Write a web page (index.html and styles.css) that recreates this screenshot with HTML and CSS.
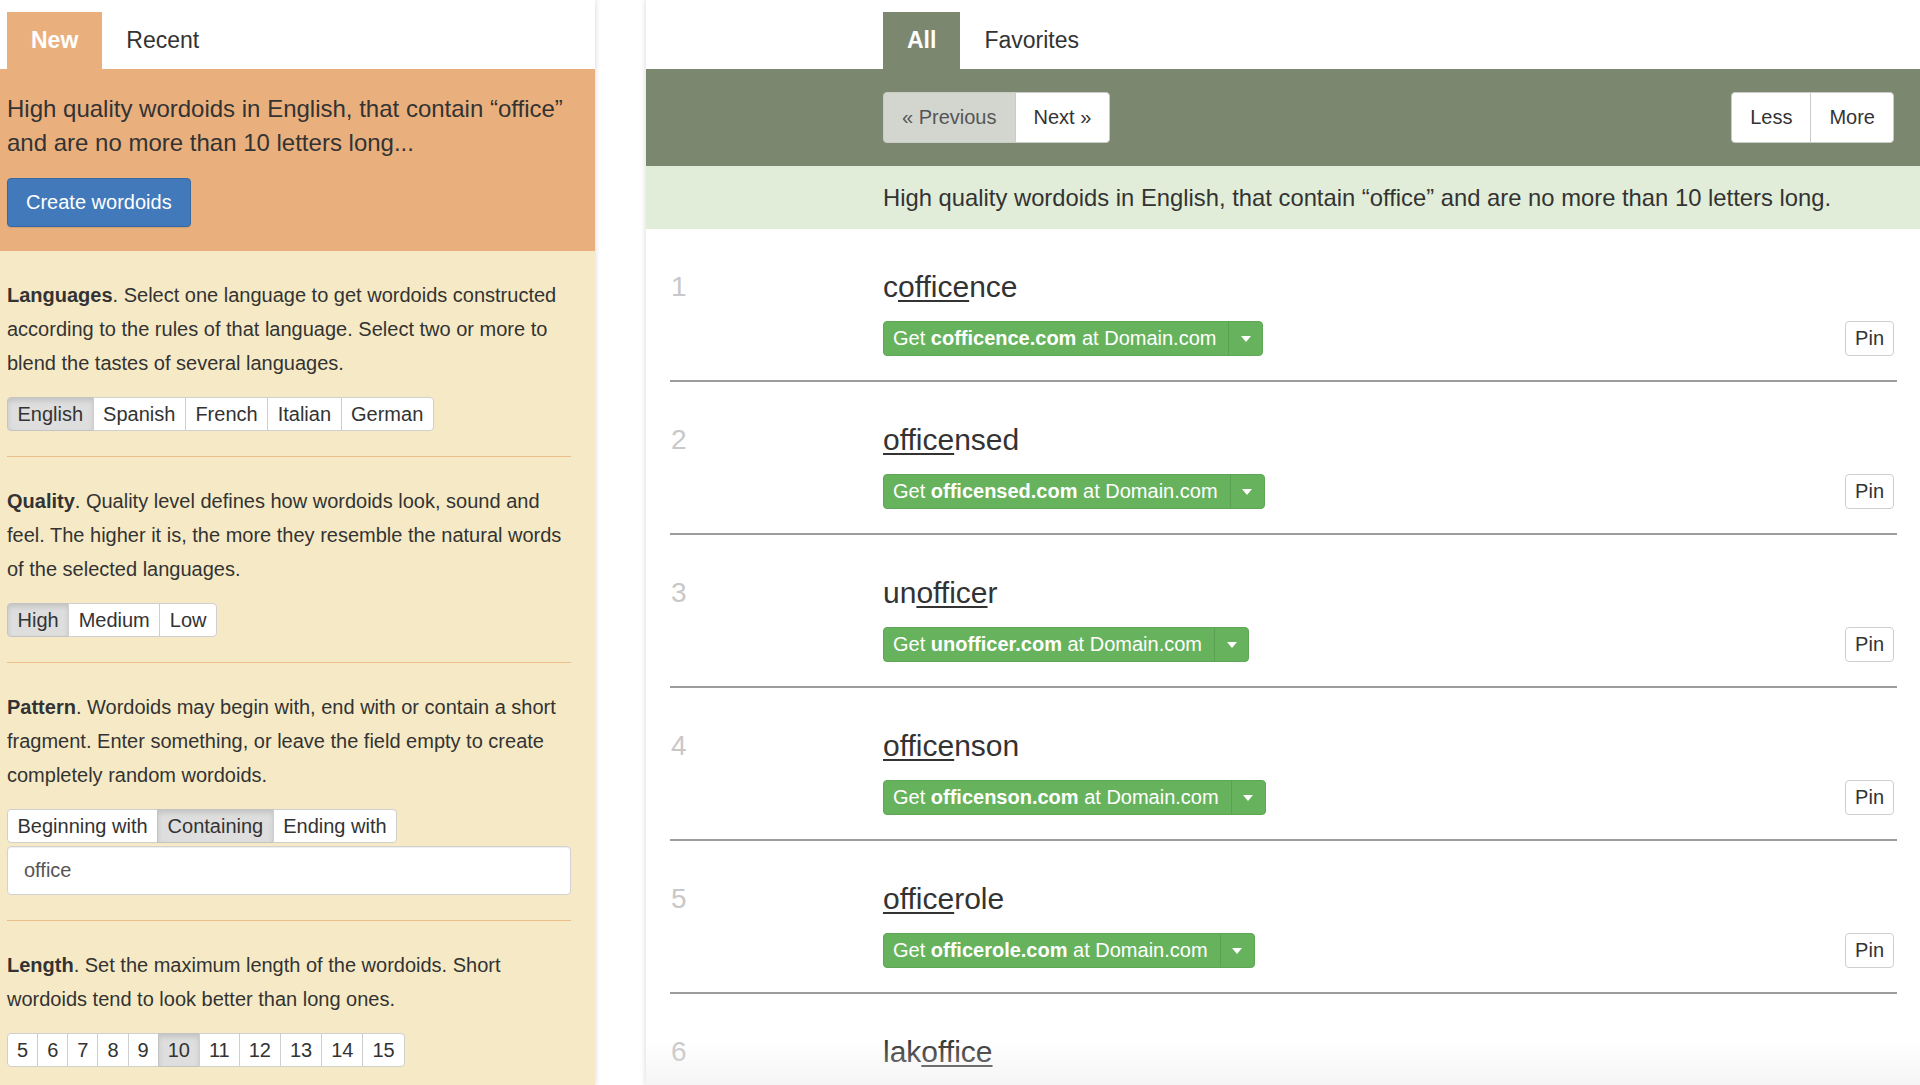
FILE: index.html
```html
<!DOCTYPE html>
<html lang="en">
<head>
  <meta charset="UTF-8" />
  <meta name="viewport" content="width=device-width, initial-scale=1" />
  <title>Wordoids</title>
  <link rel="stylesheet" href="styles.css">
</head>
<body>
<div class="app">

  <aside class="builder">
    <nav class="tabs tabs-builder">
      <a class="tab active">New</a>
      <a class="tab">Recent</a>
    </nav>

    <div class="intro">
      <p>High quality wordoids in English, that contain “office” and are no more than 10 letters long...</p>
      <button class="btn-create">Create wordoids</button>
    </div>

    <div class="options">
      <section class="option">
        <p><b>Languages</b>. Select one language to get wordoids constructed according to the rules of that language. Select two or more to blend the tastes of several languages.</p>
        <div class="btn-group">
          <span class="btn active">English</span>
          <span class="btn">Spanish</span>
          <span class="btn">French</span>
          <span class="btn">Italian</span>
          <span class="btn">German</span>
        </div>
      </section>

      <section class="option">
        <p><b>Quality</b>. Quality level defines how wordoids look, sound and feel. The higher it is, the more they resemble the natural words of the selected languages.</p>
        <div class="btn-group">
          <span class="btn active">High</span>
          <span class="btn">Medium</span>
          <span class="btn">Low</span>
        </div>
      </section>

      <section class="option">
        <p><b>Pattern</b>. Wordoids may begin with, end with or contain a short fragment. Enter something, or leave the field empty to create completely random wordoids.</p>
        <div class="btn-group">
          <span class="btn">Beginning with</span>
          <span class="btn active">Containing</span>
          <span class="btn">Ending with</span>
        </div>
        <input class="pattern-input" type="text" value="office">
      </section>

      <section class="option">
        <p><b>Length</b>. Set the maximum length of the wordoids. Short wordoids tend to look better than long ones.</p>
        <div class="btn-group lengths">
          <span class="btn">5</span>
          <span class="btn">6</span>
          <span class="btn">7</span>
          <span class="btn">8</span>
          <span class="btn">9</span>
          <span class="btn active">10</span>
          <span class="btn">11</span>
          <span class="btn">12</span>
          <span class="btn">13</span>
          <span class="btn">14</span>
          <span class="btn">15</span>
        </div>
      </section>
    </div>
  </aside>

  <main class="results">
    <nav class="tabs tabs-results">
      <a class="tab active">All</a>
      <a class="tab">Favorites</a>
    </nav>

    <div class="toolbar">
      <div class="btn-group pager">
        <span class="btn disabled">« Previous</span>
        <span class="btn">Next »</span>
      </div>
      <div class="btn-group pager">
        <span class="btn">Less</span>
        <span class="btn">More</span>
      </div>
    </div>

    <div class="summary">High quality wordoids in English, that contain “office” and are no more than 10 letters long.</div>

    <div class="list">
      <div class="row">
        <div class="num">1</div>
        <div class="word">c<u>office</u>nce</div>
        <div class="get"><span class="label">Get <b>cofficence.com</b> at Domain.com</span><span class="caret"></span></div>
        <span class="pin">Pin</span>
      </div>
      <div class="row">
        <div class="num">2</div>
        <div class="word"><u>office</u>nsed</div>
        <div class="get"><span class="label">Get <b>officensed.com</b> at Domain.com</span><span class="caret"></span></div>
        <span class="pin">Pin</span>
      </div>
      <div class="row">
        <div class="num">3</div>
        <div class="word">un<u>office</u>r</div>
        <div class="get"><span class="label">Get <b>unofficer.com</b> at Domain.com</span><span class="caret"></span></div>
        <span class="pin">Pin</span>
      </div>
      <div class="row">
        <div class="num">4</div>
        <div class="word"><u>office</u>nson</div>
        <div class="get"><span class="label">Get <b>officenson.com</b> at Domain.com</span><span class="caret"></span></div>
        <span class="pin">Pin</span>
      </div>
      <div class="row">
        <div class="num">5</div>
        <div class="word"><u>office</u>role</div>
        <div class="get"><span class="label">Get <b>officerole.com</b> at Domain.com</span><span class="caret"></span></div>
        <span class="pin">Pin</span>
      </div>
      <div class="row">
        <div class="num">6</div>
        <div class="word">lak<u>office</u></div>
        <div class="get"><span class="label">Get <b>lakoffice.com</b> at Domain.com</span><span class="caret"></span></div>
        <span class="pin">Pin</span>
      </div>
    </div>
  </main>

</div>
</body>
</html>
```

FILE: styles.css
```css
body {
  margin: 0;
  height: 100vh;
  overflow: hidden;
  background: #fff;
  color: #333;
  font-family: "Liberation Sans", Arial, sans-serif;
}

.app {
  display: flex;
  gap: 51px;
  height: 100vh;
}

/* left column: the wordoid builder */
.builder {
  flex: none;
  width: 595px;
  background: #f6eac6;
  box-shadow: 1px 0 5px rgba(0, 0, 0, 0.13);
}

.tabs {
  display: flex;
  height: 57px;
  padding-top: 12px;
  background: #fff;
}

.tabs-builder { padding-left: 7px; }
.tabs-results { padding-left: 237px; }

.tab {
  padding: 0 24px;
  line-height: 57px;
  font-size: 23px;
  color: #333;
}

.tab.active {
  color: #fff;
  font-weight: bold;
}

.tabs-builder .tab.active { background: #e9b07e; }
.tabs-results .tab.active { background: #7b886f; }

.intro {
  background: #e9b07e;
  padding: 23px 24px 24px 7px;
}

.intro p {
  margin: 0 0 18px;
  font-size: 24px;
  line-height: 34px;
}

.btn-create {
  height: 49px;
  padding: 0 18px;
  font-family: inherit;
  font-size: 20px;
  color: #fff;
  background: #4179bb;
  border: 1px solid #3669a4;
  border-radius: 4px;
  box-shadow: 0 1px 1px rgba(0, 0, 0, 0.1);
}

.options {
  padding: 0 24px 0 7px;
}

.option {
  padding: 27px 0 25px;
  border-bottom: 1px solid #eabf8c;
}

.option p {
  margin: 0 0 17px;
  font-size: 20px;
  line-height: 34px;
}

.btn-group {
  display: inline-flex;
}

.btn {
  height: 34px;
  box-sizing: border-box;
  padding: 0 9.5px;
  line-height: 32px;
  font-size: 20px;
  color: #333;
  background: #fff;
  border: 1px solid #cfcfcf;
  margin-left: -1px;
  white-space: nowrap;
}

.lengths .btn { padding: 0 9px; }

.btn:first-child {
  margin-left: 0;
  border-radius: 4px 0 0 4px;
}

.btn:last-child { border-radius: 0 4px 4px 0; }

.btn.active {
  background: #dedede;
  border-color: #c4c4c4;
  box-shadow: inset 0 3px 5px rgba(0, 0, 0, 0.12);
}

.pattern-input {
  display: block;
  width: 100%;
  height: 49px;
  box-sizing: border-box;
  margin-top: 3px;
  padding: 0 16px;
  font-family: inherit;
  font-size: 20px;
  color: #555;
  background: #fff;
  border: 1px solid #d2d2d2;
  border-radius: 4px;
  box-shadow: inset 0 1px 1px rgba(0, 0, 0, 0.075);
}

/* right column: results */
.results {
  flex: 1;
  position: relative;
  overflow: hidden;
  background: #fff;
  box-shadow: -1px 0 5px rgba(0, 0, 0, 0.13);
}

.results::after {
  content: "";
  position: absolute;
  left: 0; right: 0; bottom: 0;
  height: 45px;
  background: linear-gradient(rgba(255, 255, 255, 0), rgba(236, 236, 236, 0.55));
  pointer-events: none;
}

.toolbar {
  display: flex;
  justify-content: space-between;
  padding: 23px 26px 23px 237px;
  background: #7b886f;
}

.pager .btn {
  height: 51px;
  line-height: 49px;
  padding: 0 18px;
  border-color: #c8ccc4;
}

.pager .btn.disabled {
  color: #555;
  background: #d3d6cf;
}

.summary {
  padding-left: 237px;
  line-height: 63px;
  font-size: 23.8px;
  background: #e1edd9;
}

.list {
  padding: 0 23px 0 24px;
}

.row {
  display: grid;
  grid-template-columns: 213px 1fr auto;
  grid-template-areas:
    "num word ."
    "num get pin";
  padding: 38px 0 24px;
  border-bottom: 2px solid #9c9c9c;
}

.num {
  grid-area: num;
  padding-left: 1px;
  font-size: 28px;
  line-height: 40px;
  color: #c8c8c8;
}

.word {
  grid-area: word;
  font-size: 30px;
  line-height: 40px;
  color: #333;
}

.word u {
  text-decoration-thickness: 2px;
  text-underline-offset: 3px;
}

.get {
  grid-area: get;
  justify-self: start;
  display: flex;
  margin-top: 14px;
  height: 35px;
  box-sizing: border-box;
  font-size: 20px;
  line-height: 33px;
  color: #fff;
  background: #67b35d;
  border: 1px solid #5ea855;
  border-radius: 4px;
}

.get .label {
  padding: 0 12px 0 9px;
}

.get .caret {
  width: 33px;
  border-left: 1px solid rgba(0, 0, 0, 0.1);
  display: flex;
  align-items: center;
  justify-content: center;
}

.get .caret::before {
  content: "";
  border-top: 6px solid #fff;
  border-left: 5px solid transparent;
  border-right: 5px solid transparent;
}

.pin {
  grid-area: pin;
  align-self: end;
  height: 35px;
  box-sizing: border-box;
  margin-right: 3px;
  padding: 0 9px;
  line-height: 33px;
  font-size: 20px;
  color: #333;
  background: #fff;
  border: 1px solid #cfcfcf;
  border-radius: 4px;
}
```
